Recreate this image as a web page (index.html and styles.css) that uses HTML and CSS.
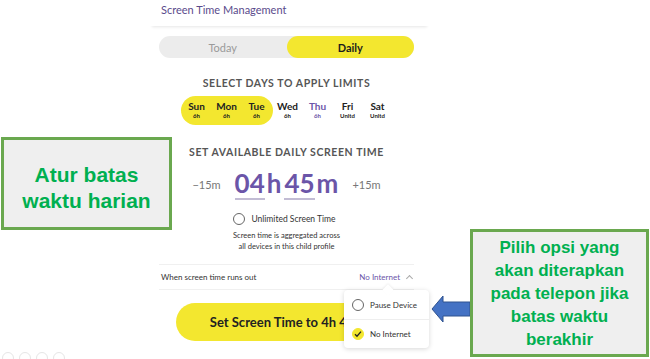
FILE: index.html
```html
<!DOCTYPE html>
<html lang="en">
<head>
  <meta charset="UTF-8">
  <meta name="viewport" content="width=device-width, initial-scale=1.0">
  <title>Screen Time Management</title>
  <link rel="stylesheet" href="styles.css">
</head>
<body>
  <div class="stage">
    <div class="panel">
      <div class="header">Screen Time Management</div>

      <div class="content">
        <div class="toggle">
          <div class="tab">Today</div>
          <div class="tab active">Daily</div>
        </div>

        <div class="section-title days-title">SELECT DAYS TO APPLY LIMITS</div>
        <div class="days">
          <div class="selected">
            <div class="day"><span class="name">Sun</span><span class="sub">6h</span></div>
            <div class="day"><span class="name">Mon</span><span class="sub">6h</span></div>
            <div class="day"><span class="name">Tue</span><span class="sub">6h</span></div>
          </div>
          <div class="day"><span class="name">Wed</span><span class="sub">6h</span></div>
          <div class="day today"><span class="name">Thu</span><span class="sub">6h</span></div>
          <div class="day"><span class="name">Fri</span><span class="sub">Unltd</span></div>
          <div class="day"><span class="name">Sat</span><span class="sub">Unltd</span></div>
        </div>

        <div class="section-title time-title">SET AVAILABLE DAILY SCREEN TIME</div>
        <div class="time-row">
          <span class="step">&minus;15m</span>
          <div class="time">
            <span class="num">04</span><span class="unit">h</span>
            <span class="num">45</span><span class="unit">m</span>
          </div>
          <span class="step">+15m</span>
        </div>

        <div class="unlimited">
          <span class="radio"></span>
          <span>Unlimited Screen Time</span>
        </div>
        <div class="note">Screen time is aggregated across<br>all devices in this child profile</div>

        <div class="runs-out">
          <span>When screen time runs out</span>
          <span class="choice">No Internet <span class="chev"></span></span>
        </div>

        <button class="set-btn">Set Screen Time to 4h 45m</button>
      </div>

      <div class="menu">
        <div class="menu-item">
          <span class="radio"></span>
          <span>Pause Device</span>
        </div>
        <div class="menu-item">
          <span class="radio checked">
            <svg width="8" height="8" viewBox="0 0 8 8"><path d="M1 4.2 L3 6.2 L7 1.6" fill="none" stroke="#222" stroke-width="1.3"/></svg>
          </span>
          <span>No Internet</span>
        </div>
      </div>
    </div>

    <div class="callout callout-left">Atur batas<br>waktu harian</div>

    <svg class="arrow" width="40" height="28" viewBox="0 0 40 28">
      <polygon points="1,14 12,1 12,7 39,7 39,21 12,21 12,27" fill="#4472c4" stroke="#2f528f" stroke-width="1"/>
    </svg>

    <div class="callout callout-right">Pilih opsi yang<br>akan diterapkan<br>pada telepon jika<br>batas waktu<br>berakhir</div>

    <div class="tray">
      <span></span><span></span><span></span><span></span>
    </div>
  </div>
</body>
</html>
```

FILE: styles.css
```css
* {
  box-sizing: border-box;
}

body {
  margin: 0;
  background-color: #ffffff;
  font-family: Lato, "Noto Sans", sans-serif;
  color: #222;
}

.stage {
  position: relative;
  width: 650px;
  height: 359px;
  overflow: hidden;
}

.panel {
  position: relative;
  width: 281px;
  margin-left: 149px;
  height: 359px;
  background-color: #ffffff;
}

.header {
  height: 26px;
  padding: 3px 0 0 12px;
  font-size: 11px;
  color: #5a4b8c;
  box-shadow: 0 4px 3px -3px rgba(0, 0, 0, 0.1);
}

.content {
  padding: 10px 16px 0 10px;
  display: flex;
  flex-direction: column;
  align-items: center;
}

.toggle {
  display: flex;
  width: 100%;
  height: 22px;
  border-radius: 11px;
  background-color: #ececec;
}

.tab {
  flex: 1;
  display: flex;
  justify-content: center;
  align-items: center;
  font-size: 11px;
  color: #9a9a9a;
  border-radius: 11px;
}

.tab.active {
  background-color: #f3e72f;
  color: #1c1c1c;
  font-weight: bold;
}

.section-title {
  font-size: 10.5px;
  font-weight: bold;
  color: #565656;
  letter-spacing: 0.6px;
}

.days-title {
  margin-top: 19px;
}

.days {
  display: flex;
  align-items: center;
  margin-top: 7px;
}

.selected {
  display: flex;
  background-color: #f3e72f;
  border-radius: 15px;
  padding: 0 1px;
}

.day {
  width: 30px;
  height: 29px;
  display: flex;
  flex-direction: column;
  align-items: center;
  justify-content: center;
}

.day .name {
  font-size: 10px;
  font-weight: bold;
  line-height: 11px;
}

.day .sub {
  font-size: 6px;
  font-weight: bold;
  line-height: 8px;
}

.day.today {
  color: #6b55a8;
}

.time-title {
  margin-top: 21px;
}

.time-row {
  display: flex;
  align-items: center;
  gap: 14px;
  margin-top: 10px;
}

.step {
  font-size: 11px;
  color: #777;
}

.time {
  display: flex;
  align-items: baseline;
  color: #6b55a8;
  font-weight: bold;
}

.num {
  font-size: 26px;
  line-height: 30px;
  border-bottom: 2px solid #c2bcd4;
}

.unit {
  font-size: 26px;
  line-height: 30px;
  margin: 0 3px 0 2px;
}

.unit:last-child {
  margin-right: 0;
}

.unlimited {
  display: flex;
  align-items: center;
  gap: 6px;
  margin-top: 13px;
  margin-right: 4px;
  font-size: 8.5px;
  color: #333;
}

.radio {
  width: 12px;
  height: 12px;
  border: 1.3px solid #666;
  border-radius: 50%;
  display: flex;
  justify-content: center;
  align-items: center;
}

.radio.checked {
  background-color: #f3e72f;
  border-color: #f3e72f;
}

.note {
  margin-top: 5px;
  font-size: 7.5px;
  line-height: 11px;
  text-align: center;
  color: #333;
}

.runs-out {
  width: 100%;
  margin-top: 12px;
  height: 26px;
  display: flex;
  justify-content: space-between;
  align-items: center;
  padding: 0 2px 0 2px;
  border-top: 1px solid #f0f0f0;
  border-bottom: 1px solid #f0f0f0;
  font-size: 8px;
  color: #333;
}

.choice {
  color: #6b55a8;
  display: flex;
  align-items: center;
  gap: 7px;
}

.chev {
  width: 5px;
  height: 5px;
  border-left: 1px solid #aaa;
  border-top: 1px solid #aaa;
  transform: rotate(45deg);
  margin-top: 3px;
}

.set-btn {
  margin-top: 13px;
  width: 224px;
  height: 38px;
  border: none;
  border-radius: 19px;
  background-color: #f3e72f;
  font-family: Lato, "Noto Sans", sans-serif;
  font-size: 13px;
  font-weight: bold;
  color: #222;
  margin-left: 2px;
}

.menu {
  position: absolute;
  left: 195px;
  top: 290px;
  width: 85px;
  background-color: #ffffff;
  border-radius: 4px;
  box-shadow: 0 1px 5px rgba(0, 0, 0, 0.16);
}

.menu::before {
  content: "";
  position: absolute;
  top: -4px;
  left: 40px;
  width: 8px;
  height: 8px;
  background-color: #ffffff;
  transform: rotate(45deg);
  box-shadow: -1px -1px 2px rgba(0, 0, 0, 0.06);
}

.menu-item {
  position: relative;
  display: flex;
  align-items: center;
  gap: 6px;
  height: 29px;
  padding-left: 8px;
  font-size: 8px;
  color: #333;
}

.menu-item + .menu-item {
  border-top: 1px solid #eeeeee;
}

.callout {
  position: absolute;
  background-color: #efefef;
  border: 3px solid #6aa84f;
  color: #00b050;
  font-family: "Liberation Sans", Arial, sans-serif;
  font-weight: bold;
  text-align: center;
  display: flex;
  align-items: center;
  justify-content: center;
}

.callout-left {
  left: 1px;
  top: 137px;
  width: 171px;
  height: 93px;
  padding-top: 8px;
  font-size: 21px;
  line-height: 26px;
}

.callout-right {
  left: 470px;
  top: 229px;
  width: 179px;
  height: 128px;
  font-size: 17px;
  line-height: 23px;
}

.arrow {
  position: absolute;
  left: 431px;
  top: 295px;
}

.tray {
  position: absolute;
  left: 2px;
  top: 352px;
  display: flex;
  gap: 5px;
}

.tray span {
  width: 12px;
  height: 12px;
  border: 1px solid #e6e6e6;
  border-radius: 50%;
}
```
